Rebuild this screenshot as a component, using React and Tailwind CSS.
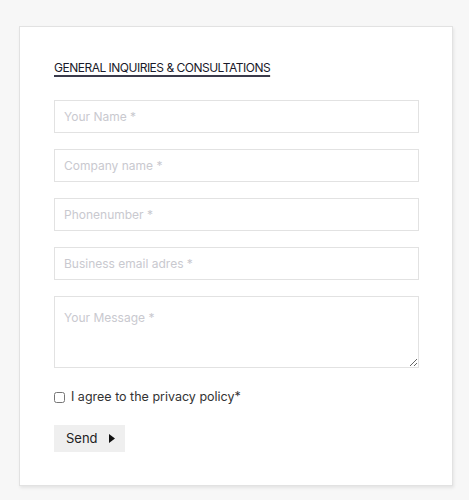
import React from 'react';

export default function App() {
  const fields = ['Your Name *', 'Company name *', 'Phonenumber *', 'Business email adres *'];

  return (
    <div className="min-h-[500px] bg-[#f7f7f7] pt-[26px] pl-[19px]" style={{ fontFamily: 'Inter, "Noto Sans", sans-serif' }}>
      <div className="w-[434px] h-[460px] bg-white border border-[#e2e2e2] shadow-[1px_2px_3px_rgba(0,0,0,0.08)] px-[34px] pt-[33px]">
        {/* Heading */}
        <h2 className="text-[12px] leading-[16px] text-[#1a1a2a] tracking-[-0.5px] underline decoration-[#3a3a4a] decoration-[2px] underline-offset-[3px] mb-[24px]">
          GENERAL INQUIRIES &amp; CONSULTATIONS
        </h2>

        <form className="flex flex-col">
          {fields.map((f) => (
            <input
              key={f}
              type="text"
              placeholder={f}
              className="w-[365px] h-[33px] mb-[16px] border border-[#e2e2e2] px-[9px] text-[12px] text-[#333] placeholder:text-[#c9c9cf] outline-none"
            />
          ))}
          <textarea
            placeholder="Your Message *"
            className="w-[365px] h-[72px] border border-[#e2e2e2] px-[9px] pt-[12px] text-[12px] text-[#333] placeholder:text-[#c9c9cf] outline-none"
          />

          {/* Consent */}
          <label className="flex items-center mt-[20px] text-[12.5px] text-[#333]">
            <input type="checkbox" className="w-[11px] h-[11px] mr-[6px]" />
            I agree to the privacy policy*
          </label>

          {/* Send */}
          <button type="button" className="mt-[18px] w-[71px] h-[27px] bg-[#efefef] flex items-center pl-[12px] text-[13px] text-[#222]">
            Send
            <svg width="6" height="9" viewBox="0 0 6 9" className="ml-[11px]">
              <path d="M0 0 L6 4.5 L0 9 Z" fill="#111" />
            </svg>
          </button>
        </form>
      </div>
    </div>
  );
}
